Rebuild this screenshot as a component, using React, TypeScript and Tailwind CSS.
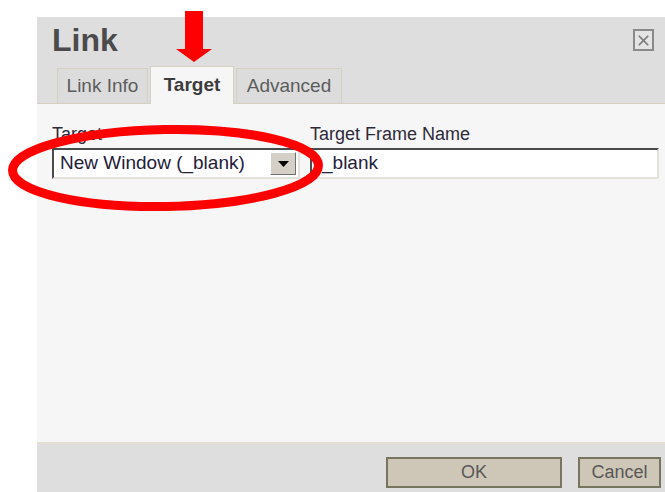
import { X } from "lucide-react"

const font = { fontFamily: '"Liberation Sans", Arial, sans-serif' }

function Tab({ label, width, active }: { label: string; width: string; active?: boolean }) {
  return (
    <div
      className={
        active
          ? `relative -mb-px flex h-[38px] items-center justify-center border border-b-0 border-[#d6d0c0] bg-[#f6f6f6] text-[19px] font-bold text-[#3c3c3c] ${width}`
          : `flex h-[35px] items-center justify-center border border-b-0 border-[#d6d0c0] bg-[#dcdcdc] text-[19px] text-[#5c5c5c] ${width}`
      }
    >
      {label}
    </div>
  )
}

export default function App() {
  return (
    <div className="relative h-[492px] w-[665px] overflow-hidden bg-white" style={font}>
      <div className="ml-[37px] mt-[17px] flex h-[475px] flex-col bg-[#f6f6f6]">
        {/* title bar + tabs */}
        <div className="flex h-[87px] flex-col justify-between border-b border-[#d6d0c0] bg-[#dedede]">
          <div className="flex items-start justify-between pl-[15px] pr-[11px] pt-[3px]">
            <span className="text-[32px] font-bold leading-[40px] text-[#4b4b4b]">Link</span>
            <button className="mt-[9px] flex h-[22px] w-[21px] items-center justify-center border-2 border-[#8a8a8a] bg-[#e4e4e4] text-[#7a7a7a]">
              <X size={17} strokeWidth={2.4} />
            </button>
          </div>
          <div className="flex items-end gap-[2px] pl-[20px]">
            <Tab label="Link Info" width="w-[91px]" />
            <Tab label="Target" width="w-[84px]" active />
            <Tab label="Advanced" width="w-[106px]" />
          </div>
        </div>

        {/* form */}
        <div className="flex flex-1 gap-[10px] pl-[15px] pr-[6px] pt-[19px]">
          <div className="flex w-[248px] flex-col">
            <label className="text-[18px] leading-[22px] text-[#2e2a3a]">Target</label>
            <div className="mt-[3px] flex h-[31px] items-center border-2 border-b-[#e4e1d8] border-l-[#4a4a4a] border-r-[#e4e1d8] border-t-[#4a4a4a] bg-white pl-[6px] pr-[2px]">
              <span className="flex-1 text-[19px] text-[#24203a]">New Window (_blank)</span>
              <div className="flex h-[23px] w-[26px] items-center justify-center border border-b-[#707070] border-l-white border-r-[#707070] border-t-white bg-[#d4d0c8]">
                <svg width="11" height="6" viewBox="0 0 11 6">
                  <polygon points="0,0 11,0 5.5,6" fill="#000" />
                </svg>
              </div>
            </div>
          </div>
          <div className="flex flex-1 flex-col">
            <label className="text-[18px] leading-[22px] text-[#2e2a3a]">Target Frame Name</label>
            <div className="mt-[3px] flex h-[31px] items-center border-2 border-b-[#e4e1d8] border-l-[#4a4a4a] border-r-[#e4e1d8] border-t-[#4a4a4a] bg-white pl-[10px]">
              <span className="text-[19px] text-[#24203a]">_blank</span>
            </div>
          </div>
        </div>

        {/* footer buttons */}
        <div className="flex h-[50px] items-start justify-end gap-[16px] border-t-2 border-[#e2ded2] bg-[#dedede] pr-[4px] pt-[13px]">
          <button className="flex h-[31px] w-[176px] items-center justify-center border-2 border-[#77745f] bg-[#cec7b7] text-[18px] text-[#585858]">
            OK
          </button>
          <button className="flex h-[31px] w-[83px] items-center justify-center border-2 border-[#77745f] bg-[#cec7b7] text-[18px] text-[#585858]">
            Cancel
          </button>
        </div>
      </div>

      {/* red annotations */}
      <svg className="pointer-events-none absolute inset-0" width="665" height="492" viewBox="0 0 665 492">
        <polygon points="185,11 203,11 203,49 212,49 194,62 176,49 185,49" fill="#ff0000" />
        <ellipse cx="165.5" cy="168" rx="153" ry="38.5" fill="none" stroke="#ff0000" strokeWidth="9" transform="rotate(-1 165.5 168)" />
      </svg>
    </div>
  )
}
